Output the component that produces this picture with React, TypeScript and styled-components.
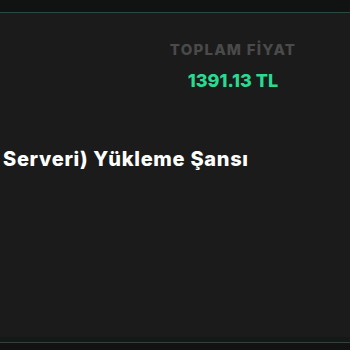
import React from "react";
import styled, { createGlobalStyle } from "styled-components";

const Global = createGlobalStyle`
  html, body { margin: 0; padding: 0; background: #111313; }
  body { font-family: Inter, "Noto Sans", sans-serif; overflow: hidden; }
`;

const Page = styled.div`
  width: 350px;
  height: 350px;
  display: flex;
  flex-direction: column;
  background: #111313;
  overflow: hidden;
`;

const TopBar = styled.div`
  height: 12px;
  flex: none;
  background: #111313;
  border-bottom: 1px solid #2c4a43;
`;

const Panel = styled.div`
  height: 324px;
  flex: none;
  background: #1b1b1b;
  display: flex;
  flex-direction: column;
  overflow: hidden;
`;

const PriceRow = styled.div`
  display: flex;
  justify-content: flex-end;
  padding: 28px 47px 0 0;
`;

const PriceBlock = styled.div`
  width: 140px;
  display: flex;
  flex-direction: column;
  align-items: center;
  gap: 11px;
`;

const Label = styled.div`
  font-size: 15px;
  font-weight: 800;
  color: #4a4a4a;
  letter-spacing: 1.2px;
  line-height: 18px;
  white-space: nowrap;
`;

const Price = styled.div`
  font-size: 18px;
  font-weight: 800;
  color: #2bd990;
  letter-spacing: 0;
  line-height: 22px;
  white-space: nowrap;
`;

const Title = styled.div`
  padding: 55px 0 0 3px;
  font-size: 20px;
  font-weight: 800;
  color: #ffffff;
  letter-spacing: 0.7px;
  line-height: 24px;
  white-space: nowrap;
`;

const Band = styled.div`
  height: 5px;
  flex: none;
  background: #121a18;
  border-bottom: 1px solid #3a3f3d;
`;

const Footer = styled.div`
  flex: 1;
  background: #111313;
`;

export default function App() {
  return (
    <Page>
      <Global />
      <TopBar />
      <Panel>
        <PriceRow>
          <PriceBlock>
            <Label>TOPLAM FİYAT</Label>
            <Price>1391.13 TL</Price>
          </PriceBlock>
        </PriceRow>
        <Title>Serveri) Yükleme Şansı</Title>
      </Panel>
      <Band />
      <Footer />
    </Page>
  );
}
